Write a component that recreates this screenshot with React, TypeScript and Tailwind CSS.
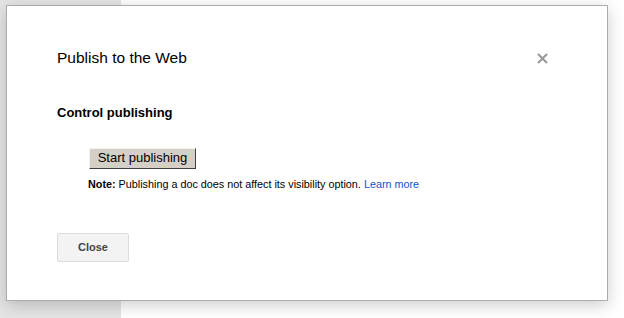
export default function App() {
  return (
    <div className="relative h-[318px] w-[624px] overflow-hidden font-['Liberation_Sans',Arial,sans-serif]">
      <div className="flex h-full">
        <div className="w-[121px] bg-[#e5e5e5]" />
        <div className="flex-1 bg-white" />
      </div>

      {/* modal */}
      <div className="absolute left-[6px] top-[5px] h-[296px] w-[602px] border border-[#acacac] bg-white shadow-[0_4px_16px_rgba(0,0,0,0.2)]">
        <div className="flex items-start justify-between pl-[50px] pr-[59px] pt-[40px]">
          <h1 className="text-[15.5px] leading-[24px] text-[#000]">Publish to the Web</h1>
          <button className="mt-[7px] p-0" aria-label="Close">
            <svg width="11" height="11" viewBox="0 0 11 11">
              <path d="M1 1 L10 10 M10 1 L1 10" stroke="#9a9a9a" strokeWidth="2.2" />
            </svg>
          </button>
        </div>

        <div className="pl-[50px] pt-[35px]">
          <h2 className="text-[13px] font-bold leading-[16px] text-black">Control publishing</h2>

          <div className="pl-[32px] pt-[24px]">
            <button className="h-[21px] w-[107px] border border-t-[#f4f3ef] border-l-[#f4f3ef] border-r-[#404040] border-b-[#404040] bg-[#d4d0c8] text-[13px] leading-[16px] text-black">
              Start publishing
            </button>
            <p className="-ml-[1px] mt-[8px] text-[10.8px] leading-[14px] text-black">
              <b>Note:</b> Publishing a doc does not affect its visibility option.{" "}
              <a href="#" className="text-[#15c]">Learn more</a>
            </p>
          </div>

          <button className="mt-[42px] h-[29px] w-[72px] rounded-[2px] border border-[#dcdcdc] bg-[#f3f3f3] text-[11px] font-bold text-[#444]">
            Close
          </button>
        </div>
      </div>
    </div>
  );
}
